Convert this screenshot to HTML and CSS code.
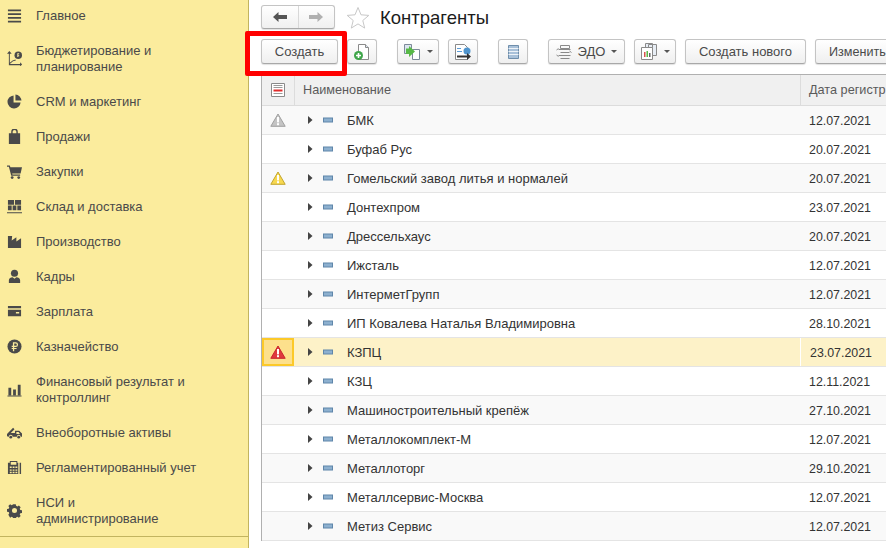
FILE: index.html
```html
<!DOCTYPE html>
<html lang="ru">
<head>
    <meta charset="UTF-8">
    <meta name="viewport" content="width=device-width, initial-scale=1.0">
    <link rel="stylesheet" href="styles.css">
    <title>Контрагенты</title>
</head>
<body>
    <svg class="sprite" width="0" height="0">
        <symbol id="warn" viewBox="0 0 16 14">
            <path class="warn-shape" d="M8 1 15.200 13.300H.8Z" stroke-width="1" stroke-linejoin="round"/>
            <rect x="7" y="4" width="2" height="5.400" fill="#fff"/>
            <rect x="7" y="10.200" width="2" height="2" fill="#fff"/>
        </symbol>
        <symbol id="node" viewBox="0 0 36 8">
            <path d="M0 0 4.500 4 0 8Z" fill="#444"/>
            <rect x="15.500" y="2" width="9" height="4" fill="#8db0cf" stroke="#5f86aa" stroke-width="1"/>
        </symbol>
    </svg>

    <nav class="sidebar">
        <a class="side-item side-first">
            <svg class="side-icon" viewBox="0 0 16 16"><path d="M1 1.500h14v2H1zM1 5.500h14v2H1zM1 9.500h14v2H1zM1 13.500h14v2H1z"/></svg>
            <span>Главное</span>
        </a>
        <a class="side-item">
            <svg class="side-icon" viewBox="0 0 16 16"><path d="M2.500 0 5 3H3v9.500l3-2.500 3-1 .4 1-3 1-3.400 2.800H14V12l2.200 2.300L14 16.500v-1.200H2V3H0Z"/><circle cx="12" cy="4.500" r="4"/><path d="M11 2.500h2v1h-1v1h1v1h-1v1h-1z" fill="#fbec9d"/></svg>
            <span>Бюджетирование и<br>планирование</span>
        </a>
        <a class="side-item">
            <svg class="side-icon" viewBox="0 0 16 16"><path d="M7 1.500A7 7 0 1 0 14.500 9H7Z"/><path d="M9 .5A7 7 0 0 1 15.500 7H9Z"/></svg>
            <span>CRM и маркетинг</span>
        </a>
        <a class="side-item">
            <svg class="side-icon" viewBox="0 0 16 16"><path d="M2 4.500h2.500V3a3.500 3.500 0 0 1 7 0v1.500H14V16H2ZM6 4.500h4V3a2 2 0 0 0-4 0Z" fill-rule="evenodd"/></svg>
            <span>Продажи</span>
        </a>
        <a class="side-item">
            <svg class="side-icon" viewBox="0 0 16 16"><path d="M0 1.500h3l.6 2H16l-1.500 6.500H5.500l.3 1.300H14v1.300H4.500L2 2.800H0Z"/><circle cx="5.500" cy="14.500" r="1.500"/><circle cx="12.500" cy="14.500" r="1.500"/></svg>
            <span>Закупки</span>
        </a>
        <a class="side-item">
            <svg class="side-icon" viewBox="0 0 16 16"><path d="M1 1h6.500v5H1zM8.500 1H15v5H8.500zM1 7h4v5H1zM6 7h4v5H6zM11 7h4v5h-4zM0 14h16v1.200H0z"/></svg>
            <span>Склад и доставка</span>
        </a>
        <a class="side-item">
            <svg class="side-icon" viewBox="0 0 16 16"><path d="M1 15V2h4.500L5 7l5-3.500V8l5-3.500V15Z"/></svg>
            <span>Производство</span>
        </a>
        <a class="side-item">
            <svg class="side-icon" viewBox="0 0 16 16"><circle cx="8" cy="4.500" r="3.800"/><path d="M2 15v-3c0-2 2-3 4-3.200l2 1.700 2-1.700c2 .2 4 1.200 4 3.200v3Z"/></svg>
            <span>Кадры</span>
        </a>
        <a class="side-item">
            <svg class="side-icon" viewBox="0 0 16 16"><path d="M1 2h14v2.500H1zM1 6h14v7H1zM9.500 8.500v1.500H13V8.500Z" fill-rule="evenodd"/></svg>
            <span>Зарплата</span>
        </a>
        <a class="side-item">
            <svg class="side-icon" viewBox="0 0 16 16"><circle cx="8" cy="8" r="7.500"/><path d="M6.300 3.500h3a2.500 2.500 0 0 1 0 5H7.700v1h2.500v1.200H7.700V13H6.300v-2.300H5V9.500h1.300v-1H5V7.300h1.300ZM7.700 4.800v2.500h1.500a1.250 1.250 0 0 0 0-2.500Z" fill="#fbec9d" fill-rule="evenodd"/></svg>
            <span>Казначейство</span>
        </a>
        <a class="side-item">
            <svg class="side-icon" viewBox="0 0 16 16"><path d="M1.500 6h3v8h-3zM6.500 8h3v6h-3zM11.500 3h3v11h-3zM.5 14.500h15v1H.5z"/></svg>
            <span>Финансовый результат и<br>контроллинг</span>
        </a>
        <a class="side-item">
            <svg class="side-icon" viewBox="0 0 16 16"><path d="M0 12V9.500L6.500 3l1.500 1.500L4 8.500h4.500V6h4.500l3 3v3.500h-1.500a2 2 0 0 0-4 0H6a2 2 0 0 0-4 0Z"/><circle cx="4" cy="13" r="1.500"/><circle cx="12.500" cy="13" r="1.500"/><path d="M10 7.500h2.300l1.500 2H10Z" fill="#fbec9d"/></svg>
            <span>Внеоборотные активы</span>
        </a>
        <a class="side-item">
            <svg class="side-icon" viewBox="0 0 16 16"><path d="M3 1h8v2h1v12H1V3h2Zm1 1v3h6V2ZM3 7v1.500h2V7Zm3 0v1.500h2V7Zm3 0v1.500h2V7ZM3 10v1.500h2V10Zm3 0v1.500h2V10Zm3 0v1.500h2V10Zm-6 2.500V14h2v-1.500Zm3 0V14h2v-1.500Zm3 0V14h2v-1.500ZM13.500 3H15v12h-1.500Z" fill-rule="evenodd"/></svg>
            <span>Регламентированный учет</span>
        </a>
        <a class="side-item">
            <svg class="side-icon" viewBox="0 0 16 16"><path d="M6.500 1h3l.4 2 1.500.7 1.800-1.100 2.100 2.100-1.100 1.800.7 1.500 2 .4v3l-2 .4-.7 1.500 1.100 1.800-2.100 2.100-1.800-1.100-1.500.7-.4 2h-3l-.4-2-1.500-.7-1.800 1.100L.7 13.600l1.100-1.800-.7-1.500-2-.4V6.900l2-.4.7-1.500L.7 3.200 2.800 1.100l1.800 1.100 1.500-.7ZM8 5.500a3 3 0 1 0 0 6 3 3 0 0 0 0-6Z" fill-rule="evenodd" transform="translate(.8 .3) scale(.9)"/></svg>
            <span>НСИ и<br>администрирование</span>
        </a>
    </nav>

    <main class="content">
        <header class="title-bar">
            <div class="nav-group">
                <button class="nav-button">
                    <svg width="14" height="10" viewBox="0 0 14 10"><path d="M0 5 5.500 0v3H14v4H5.500v3Z" fill="#555"/></svg>
                </button>
                <button class="nav-button">
                    <svg width="14" height="10" viewBox="0 0 14 10"><path d="M14 5 8.500 0v3H0v4h8.500v3Z" fill="#b0b0b0"/></svg>
                </button>
            </div>
            <svg class="star" width="24" height="23" viewBox="0 0 24 23"><path d="M12 1.500 15 8.800l7.800.6-6 5.100 1.900 7.600L12 17.900l-6.700 4.200 1.900-7.600-6-5.100 7.800-.6Z" fill="#fff" stroke="#c8c8c8"/></svg>
            <h1 class="page-title">Контрагенты</h1>
        </header>

        <div class="toolbar">
            <button class="tool-button create-button">Создать</button>
            <button class="tool-button icon-button add-button">
                <svg width="18" height="18" viewBox="0 0 18 18"><path d="M5.500 1.500h7l3 3v12h-10Z" fill="#fff" stroke="#8a8a8a"/><path d="M12.500 1.500v3h3" fill="#dbe6f2" stroke="#8a8a8a"/><circle cx="5.500" cy="12.500" r="4.500" fill="#3fa64a"/><path d="M3 12.500h5M5.500 10v5" stroke="#fff" stroke-width="1.600"/></svg>
            </button>
            <button class="tool-button split-button copy-button">
                <svg width="18" height="18" viewBox="0 0 18 18"><path d="M1.500 1.500h7v9h-7Z" fill="#dce6f0" stroke="#7d8a99"/><path d="M9.500 6.500h7v10h-7Z" fill="#fff" stroke="#7d8a99"/><path d="M3 5.500h3V3l6 5.500-6 5.500v-3H3Z" fill="#58b947"/></svg>
                <span class="caret"></span>
            </button>
            <button class="tool-button icon-button send-button">
                <svg width="18" height="18" viewBox="0 0 18 18"><path d="M1.500 1.500h9l3 3v12h-12Z" fill="#fff" stroke="#8a8a8a"/><path d="M3 5h4v1H3zM3 8h5v1H3z" fill="#5b9bd5"/><circle cx="13" cy="8" r="3.500" fill="#4f94cd"/><path d="M3 12.500h10V10l4 3.500-4 3.500v-2.500H3Z" fill="#333"/></svg>
            </button>
            <button class="tool-button icon-button list-button">
                <svg width="11" height="14" viewBox="0 0 11 14"><path d="M.5.500h10v13H.5Z" fill="#a9c1d9" stroke="#6f8eab"/><path d="M.5 3.500h10M.5 6.500h10M.5 9.500h10" stroke="#eef3f8"/></svg>
            </button>
            <button class="tool-button split-button edo-button">
                <svg width="16" height="16" viewBox="0 0 16 16" fill="none" stroke="#8a8a8a"><path d="M4.500 1.500h9v3h-9zM2.500 5.500h12M4.500 8.500h9M2.500 11.500h12M4.500 14.500h9M.5 6l2-1.500M.5 11l2 1.500M15.500 8.500l-2-1.500"/></svg>
                <span>ЭДО</span>
                <span class="caret"></span>
            </button>
            <button class="tool-button split-button report-button">
                <svg width="18" height="18" viewBox="0 0 18 18"><path d="M5.500 .5h7v12h-7ZM8.500 1.500h8v11h-8Z" fill="#e8eef5" stroke="#8a8a8a"/><path d="M1.500 4.500h11v12h-11Z" fill="#fff" stroke="#8a8a8a"/><path d="M4 9h1.500v5H4z" fill="#d9534f"/><path d="M6.500 8H8v6H6.500z" fill="#58b947"/><path d="M9 10h1.500v4H9z" fill="#666"/></svg>
                <span class="caret"></span>
            </button>
            <button class="tool-button text-button new-button">Создать нового</button>
            <button class="tool-button text-button edit-button">Изменить</button>
        </div>

        <section class="list">
            <div class="list-row list-head">
                <div class="cell cell-mark">
                    <svg width="14" height="14" viewBox="0 0 14 14"><path d="M.5.500h13v13H.5Z" fill="#fff" stroke="#8a8a8a"/><path d="M2.500 2.500h9M2.500 4.500h9M2.500 10.500h9" stroke="#9a9a9a"/><path d="M2.500 6.500h9v2h-9Z" fill="#e02b2b"/></svg>
                </div>
                <div class="cell cell-name">Наименование</div>
                <div class="cell cell-date">Дата регистр</div>
            </div>

            <div class="list-row odd">
                <div class="cell cell-mark mark-gray"><svg class="mark" width="16" height="14"><use href="#warn"/></svg></div>
                <div class="cell cell-name"><svg class="node" width="36" height="8"><use href="#node"/></svg>БМК</div>
                <div class="cell cell-date">12.07.2021</div>
            </div>
            <div class="list-row">
                <div class="cell cell-mark"></div>
                <div class="cell cell-name"><svg class="node" width="36" height="8"><use href="#node"/></svg>Буфаб Рус</div>
                <div class="cell cell-date">20.07.2021</div>
            </div>
            <div class="list-row odd">
                <div class="cell cell-mark mark-yellow"><svg class="mark" width="16" height="14"><use href="#warn"/></svg></div>
                <div class="cell cell-name"><svg class="node" width="36" height="8"><use href="#node"/></svg>Гомельский завод литья и нормалей</div>
                <div class="cell cell-date">20.07.2021</div>
            </div>
            <div class="list-row">
                <div class="cell cell-mark"></div>
                <div class="cell cell-name"><svg class="node" width="36" height="8"><use href="#node"/></svg>Донтехпром</div>
                <div class="cell cell-date">23.07.2021</div>
            </div>
            <div class="list-row odd">
                <div class="cell cell-mark"></div>
                <div class="cell cell-name"><svg class="node" width="36" height="8"><use href="#node"/></svg>Дрессельхаус</div>
                <div class="cell cell-date">20.07.2021</div>
            </div>
            <div class="list-row">
                <div class="cell cell-mark"></div>
                <div class="cell cell-name"><svg class="node" width="36" height="8"><use href="#node"/></svg>Ижсталь</div>
                <div class="cell cell-date">12.07.2021</div>
            </div>
            <div class="list-row odd">
                <div class="cell cell-mark"></div>
                <div class="cell cell-name"><svg class="node" width="36" height="8"><use href="#node"/></svg>ИнтерметГрупп</div>
                <div class="cell cell-date">12.07.2021</div>
            </div>
            <div class="list-row">
                <div class="cell cell-mark"></div>
                <div class="cell cell-name"><svg class="node" width="36" height="8"><use href="#node"/></svg>ИП Ковалева Наталья Владимировна</div>
                <div class="cell cell-date">28.10.2021</div>
            </div>
            <div class="list-row selected">
                <div class="cell cell-mark mark-red"><svg class="mark" width="16" height="14"><use href="#warn"/></svg></div>
                <div class="cell cell-name"><svg class="node" width="36" height="8"><use href="#node"/></svg>КЗПЦ</div>
                <div class="cell cell-date">23.07.2021</div>
            </div>
            <div class="list-row">
                <div class="cell cell-mark"></div>
                <div class="cell cell-name"><svg class="node" width="36" height="8"><use href="#node"/></svg>КЗЦ</div>
                <div class="cell cell-date">12.11.2021</div>
            </div>
            <div class="list-row odd">
                <div class="cell cell-mark"></div>
                <div class="cell cell-name"><svg class="node" width="36" height="8"><use href="#node"/></svg>Машиностроительный крепёж</div>
                <div class="cell cell-date">27.10.2021</div>
            </div>
            <div class="list-row">
                <div class="cell cell-mark"></div>
                <div class="cell cell-name"><svg class="node" width="36" height="8"><use href="#node"/></svg>Металлокомплект-М</div>
                <div class="cell cell-date">12.07.2021</div>
            </div>
            <div class="list-row odd">
                <div class="cell cell-mark"></div>
                <div class="cell cell-name"><svg class="node" width="36" height="8"><use href="#node"/></svg>Металлоторг</div>
                <div class="cell cell-date">29.10.2021</div>
            </div>
            <div class="list-row">
                <div class="cell cell-mark"></div>
                <div class="cell cell-name"><svg class="node" width="36" height="8"><use href="#node"/></svg>Металлсервис-Москва</div>
                <div class="cell cell-date">12.07.2021</div>
            </div>
            <div class="list-row odd">
                <div class="cell cell-mark"></div>
                <div class="cell cell-name"><svg class="node" width="36" height="8"><use href="#node"/></svg>Метиз Сервис</div>
                <div class="cell cell-date">12.07.2021</div>
            </div>
        </section>
    </main>

    <div class="highlight"></div>
</body>
</html>
```

FILE: styles.css
```css
html, body {
    height: 100%;
}

body {
    font-family: "Liberation Sans", Arial, sans-serif;
    font-size: 13px;
    margin: 0;
    padding: 0;
    display: flex;
    overflow: hidden;
    background-color: #fff;
    color: #4a4a4a;
}

.sprite {
    display: none;
}

/* левая панель разделов */
.sidebar {
    flex: 0 0 248px;
    height: 549px;
    margin-top: -1px;
    background-color: #fbec9d;
    border-right: 1px solid #c2b45f;
}

.sidebar::after {
    content: "";
    display: block;
    border-top: 1px solid #c2b45f;
}

.side-item {
    display: flex;
    align-items: center;
    padding: 9.500px 0 9.500px 7px;
    line-height: 16px;
    color: #4a4a4a;
}

.side-first {
    padding: 8.500px 0 9.500px 7px;
}

.side-icon {
    flex: 0 0 15px;
    width: 15px;
    height: 15px;
    margin-right: 14px;
    fill: #4a4a4a;
}

/* основная часть */
.content {
    flex: 1;
    min-width: 0;
    padding-left: 12px;
    overflow: hidden;
}

.title-bar {
    display: flex;
    align-items: center;
    height: 24px;
    margin-top: 5px;
}

.nav-group {
    display: flex;
    width: 74px;
    height: 24px;
    box-sizing: border-box;
    border: 1px solid #c4c4c4;
    border-bottom-color: #a8a8a8;
    border-radius: 3px;
    background: linear-gradient(#fff, #f0f0f0);
    box-shadow: 0 1px 1px rgba(0, 0, 0, 0.12);
}

.nav-button {
    flex: 1;
    padding: 0;
    border: none;
    background: none;
}

.nav-button + .nav-button {
    border-left: 1px solid #d8d8d8;
}

.star {
    margin-left: 11px;
}

.page-title {
    margin: 2px 0 0 10px;
    font-size: 18.500px;
    font-weight: normal;
    color: #1c1c1c;
}

.toolbar {
    display: flex;
    height: 26px;
    margin-top: 10px;
    white-space: nowrap;
}

.tool-button {
    flex: none;
    display: flex;
    align-items: center;
    justify-content: center;
    gap: 6px;
    height: 25px;
    padding: 0;
    box-sizing: border-box;
    border: 1px solid #c4c4c4;
    border-bottom-color: #a8a8a8;
    border-radius: 3px;
    background: linear-gradient(#fff, #efefef);
    box-shadow: 0 1px 1px rgba(0, 0, 0, 0.12);
    font-family: inherit;
    font-size: 13px;
    color: #4a4a4a;
}

.icon-button {
    width: 30px;
}

.create-button {
    width: 77px;
}

.add-button {
    margin-left: 9px;
}

.copy-button {
    width: 42px;
    margin-left: 20px;
}

.send-button {
    margin-left: 9px;
}

.list-button {
    margin-left: 20px;
}

.edo-button {
    width: 77px;
    margin-left: 20px;
}

.report-button {
    width: 42px;
    margin-left: 9px;
}

.text-button {
    margin-left: 9px;
}

.new-button {
    width: 121px;
}

.edit-button {
    width: 90px;
    justify-content: flex-start;
    padding-left: 13px;
    font-size: 12.600px;
}

.caret {
    width: 0;
    height: 0;
    border-left: 3px solid transparent;
    border-right: 3px solid transparent;
    border-top: 3px solid #555;
}

/* таблица */
.list {
    margin-top: 9px;
    width: 700px;
    border-top: 1px solid #b0b0b0;
    border-left: 1px solid #b0b0b0;
}

.list-row {
    display: grid;
    grid-template-columns: 32px 506px 1fr;
    height: 29px;
    box-sizing: border-box;
    border-bottom: 1px solid #e4e4e4;
    align-items: center;
    color: #333;
}

.list-head {
    height: 31px;
    background-color: #f0f0f0;
    border-bottom: 1px solid #dcdcdc;
    color: #5a5a5a;
    font-size: 12.700px;
}

.list-row.odd {
    background-color: #f9f9f9;
}

.list-row.selected {
    background-color: #fdf2c8;
}

.cell {
    display: flex;
    align-items: center;
    height: 100%;
    white-space: nowrap;
}

.cell-mark {
    justify-content: center;
    box-sizing: border-box;
}

.cell-name {
    padding-left: 8px;
}

.list-row:not(.list-head) .cell-name {
    padding-left: 14px;
}

.cell-date {
    padding-left: 8px;
}

.list-row:not(.list-head) .cell-date {
    padding: 1px 0 0 9px;
    box-sizing: border-box;
    font-size: 12.400px;
}

.list-head .cell + .cell {
    border-left: 1px solid #dcdcdc;
    box-sizing: border-box;
}

.selected .cell-date {
    border-left: 1px solid #fff;
}

.node {
    margin-right: 3px;
    flex: none;
}

.warn-shape {
    fill: currentColor;
    stroke: var(--edge);
}

.mark-gray {
    color: #c4c4c4;
    --edge: #a0a0a0;
}

.mark-yellow {
    color: #f7d84f;
    --edge: #c2a52e;
}

.mark-red {
    color: #e0383e;
    --edge: #c9252b;
    background-color: #fde08c;
    border: 2px solid #fcc929;
}

/* красная рамка поверх интерфейса */
.highlight {
    position: absolute;
    left: 245px;
    top: 31px;
    width: 102px;
    height: 45px;
    box-sizing: border-box;
    border: 5px solid #f00;
    border-radius: 2px;
}
```
